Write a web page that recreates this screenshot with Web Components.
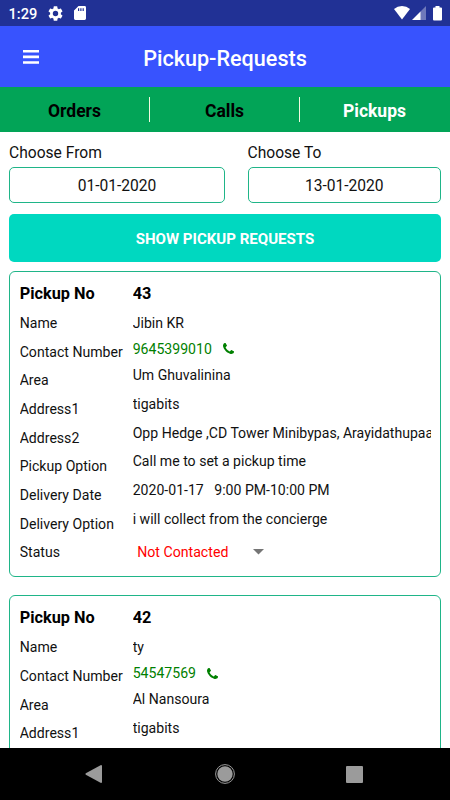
<!DOCTYPE html>
<html lang="en">
<head>
<meta charset="utf-8">
<title>Pickup-Requests</title>
<style>
html, body { margin: 0; height: 100%; }
body { font-family: Roboto, "Noto Sans", sans-serif; background: #fff; overflow: hidden; }
</style>
</head>
<body>
<pickup-app></pickup-app>
<script>
const define = (name, html, setup) => {
  const tpl = document.createElement('template');
  tpl.innerHTML = html;
  customElements.define(name, class extends HTMLElement {
    connectedCallback() {
      if (this.shadowRoot) return;
      const root = this.attachShadow({ mode: 'open' });
      root.append(tpl.content.cloneNode(true));
      if (setup) setup(this, root);
    }
  });
};

define('status-bar', `
<style>
:host { display: flex; align-items: center; height: 26px; box-sizing: border-box; padding: 0 8px 0 8.500px; background: #213195; color: #fff; flex: none; }
time { font-size: 14.6px; font-weight: 500; line-height: 26px; width: 40px; padding-top: 2px; }
svg { display: block; fill: #fff; }
.gear { margin-right: 11px; margin-left: -.5px; }
.space { flex: 1; }
.wifi { margin-right: 2px; }
.cell { margin-right: 7px; }
</style>
<time>1:29</time>
<svg class="gear" width="15" height="15" viewBox="2 2 20 20"><path d="M19.14 12.94c.04-.3.06-.61.06-.94s-.02-.64-.07-.94l2.03-1.58a.49.49 0 0 0 .12-.61l-1.92-3.32a.49.49 0 0 0-.59-.22l-2.39.96a7 7 0 0 0-1.62-.94l-.36-2.54a.48.48 0 0 0-.48-.41h-3.84a.47.47 0 0 0-.47.41l-.36 2.54c-.59.24-1.13.57-1.62.94l-2.39-.96a.48.48 0 0 0-.59.22L2.740 8.870a.47.47 0 0 0 .12.61l2.030 1.580a7.600 7.600 0 0 0 0 1.880l-2.030 1.580a.49.49 0 0 0-.12.61l1.920 3.320c.12.22.37.29.59.22l2.390-.96c.5.38 1.030.7 1.620.94l.36 2.540c.05.24.24.41.48.41h3.840c.24 0 .44-.17.47-.41l.36-2.540c.59-.24 1.130-.56 1.620-.94l2.390.96c.22.08.47 0 .59-.22l1.920-3.320a.47.47 0 0 0-.12-.61zM12 15.600A3.600 3.600 0 1 1 12 8.400a3.600 3.600 0 0 1 0 7.200z"/></svg>
<svg width="12" height="14" viewBox="0 0 12 14"><path fill-rule="evenodd" d="M4.5 0H10.6Q12 0 12 1.4V12.6Q12 14 10.6 14H1.4Q0 14 0 12.6V4.5ZM4 2.3V5H5.2V2.3ZM6.3 2.3V5H7.5V2.3ZM8.6 2.3V5H9.8V2.3Z"/></svg>
<span class="space"></span>
<svg class="wifi" width="16" height="14" viewBox="0 0 16 14"><path d="M0 3Q3.500 0 8 0T16 3L8 13.500Z"/></svg>
<svg class="cell" width="14" height="14" viewBox="0 0 14 14"><path opacity=".35" d="M8 6L14 0V14H8Z"/><path d="M0 14L8.500 5.500V14Z"/></svg>
<svg width="9" height="15" viewBox="0 0 9 15"><path d="M2.500 0H6.500V1.500H8Q9 1.500 9 2.500V13.500Q9 14.500 8 14.500H1Q0 14.500 0 13.500V2.500Q0 1.500 1 1.500H2.500Z"/></svg>
`);

define('app-header', `
<style>
:host { display: grid; grid-template-columns: 40px 1fr 40px; align-items: center; height: 61px; box-sizing: border-box; padding: 0 23px; background: #3853fe; color: #fff; flex: none; }
h1 { margin: 0; font-size: 21.600px; line-height: 30px; font-weight: 500; text-align: center; padding-top: 4px; }
svg { display: block; fill: #fff; }
</style>
<svg width="16" height="14" viewBox="0 0 16 14"><path d="M0 0H16V2.600H0ZM0 5.600H16V8.200H0ZM0 11.200H16V13.800H0Z"/></svg>
<h1><slot></slot></h1>
`);

define('tab-bar', `
<style>
:host { display: grid; grid-template-columns: repeat(3, 1fr); align-items: center; height: 45px; background: #02a457; flex: none; }
</style>
<slot></slot>
`);

define('tab-item', `
<style>
:host { display: flex; align-items: center; justify-content: center; box-sizing: border-box; height: 25px; font-size: 17.500px; font-weight: 700; color: #000; border-right: 1.400px solid #f3fadf; padding: 2px 0 0 0; }
:host([active]) { color: #fff; border-right-color: transparent; }
</style>
<slot></slot>
`);

define('date-field', `
<style>
:host { display: block; }
label { display: block; font-size: 15.600px; line-height: 20px; padding-top: 1px; color: #111; }
div { box-sizing: border-box; height: 36px; margin-top: 3.500px; border: 1px solid #1fb588; border-radius: 5px; display: flex; align-items: center; justify-content: center; font-size: 15.600px; color: #111; padding-top: 2px; }
</style>
<label></label><div><slot></slot></div>
`, (el, root) => { root.querySelector('label').textContent = el.getAttribute('label'); });

define('primary-button', `
<style>
:host { display: block; }
button { display: block; width: 100%; height: 48px; padding: 2px 0 0; border: 0; border-radius: 5px; background: #00d8c0; color: #fff; font: 700 15.050px Roboto, "Noto Sans", sans-serif; }
</style>
<button><slot></slot></button>
`);

define('phone-link', `
<style>
:host { display: flex; align-items: center; color: #008000; }
svg { display: block; fill: #008000; margin-left: 11px; }
</style>
<slot></slot>
<svg width="11" height="11" viewBox="0 0 1408 1408"><path d="M1408 1112q0 27-10 70.500t-21 68.500q-21 50-122 106-94 51-186 51-27 0-52.500-3.500t-57.500-12.500-47.500-14.500-55.500-20.500-49-18q-98-35-175-83-128-79-264.500-215.500T152 776q-48-77-83-175-3-9-18-49t-20.500-55.500T16 449 3.500 391.500 0 339q0-92 51-186Q107 52 157 31q25-11 68.500-21T296 0q14 0 21 3 18 6 53 76 11 19 30 54t35 63.500 31 53.500q3 4 17.500 25t21.500 35.500 7 28.500q0 20-28.500 50t-62 55-62 53-28.500 46q0 9 5 22.500t8.500 20.500 14 24 11.500 19q76 137 174 235t235 174q2 1 19 11.500t24 14 20.500 8.500 22.500 5q18 0 46-28.500t53-62 55-62 50-28.500q14 0 28.500 7t35.500 21.500 25 17.500q25 15 53.500 31t63.500 35 54 30q70 35 76 53 3 7 3 21z"/></svg>
`);

define('status-select', `
<style>
:host { display: flex; align-items: center; width: 131.500px; box-sizing: border-box; padding-left: 4.500px; justify-content: space-between; color: #f00; font-size: 14.150px; }
svg { display: block; }
</style>
<span><slot></slot></span>
<svg width="11" height="6" viewBox="0 0 11 6"><path fill="#757575" d="M0 0H11L5.500 5.500Z"/></svg>
`);

define('pickup-card', `
<style>
:host { display: grid; grid-template-columns: 113px minmax(0, 1fr); box-sizing: border-box; height: 305.500px; padding: 7px 9px 0 9.700px; border: 1px solid #1fb588; border-radius: 6px; background: #fff; font-size: 14.080px; color: #111; overflow: hidden; }
.labels, .values { display: flex; flex-direction: column; }
.row { display: flex; align-items: center; height: 28.770px; flex: none; white-space: pre; overflow: hidden; }
.head { height: 28px; padding-bottom: 1.500px; font-size: 16.300px; font-weight: 700; color: #000; }
.labels .row:not(.head) { height: 28.700px; }
.values .phone { height: 24px; margin-top: -.5px; }
.values .last { height: 36px; margin-top: .5px; }
</style>
<div class="labels"></div><div class="values"></div>
`, (el, root) => {
  const d = el.data;
  const add = (col, cls, text, tag) => {
    const row = document.createElement('div');
    row.className = 'row ' + cls;
    if (tag) {
      const inner = document.createElement(tag);
      inner.textContent = text;
      row.append(inner);
    } else row.textContent = text;
    root.querySelector(col).append(row);
  };
  const labels = ['Name', 'Contact Number', 'Area', 'Address1', 'Address2', 'Pickup Option', 'Delivery Date', 'Delivery Option'];
  add('.labels', 'head', 'Pickup No');
  labels.slice(0, 2 + d.details.length).forEach(t => add('.labels', '', t));
  add('.values', 'head', d.no);
  add('.values', '', d.name);
  add('.values', 'phone', d.phone, 'phone-link');
  d.details.forEach(t => add('.values', '', t));
  if (d.status) {
    add('.labels', '', 'Status');
    add('.values', 'last', d.status, 'status-select');
  }
});

define('nav-bar', `
<style>
:host { display: flex; align-items: center; justify-content: space-between; height: 52px; box-sizing: border-box; padding: 0 87px 0 85px; background: #000; flex: none; }
svg { display: block; fill: #9b9b9b; }
svg:nth-of-type(2) { margin-left: 2px; }
</style>
<svg width="17" height="18" viewBox="0 0 17 18"><path d="M16 0Q17 0 17 1V17Q17 18 16 18L.8 9.700Q0 9 .8 8.300Z"/></svg>
<svg width="20" height="20" viewBox="0 0 20 20"><circle cx="10" cy="10" r="7.700"/><circle cx="10" cy="10" r="9.400" fill="none" stroke="#9b9b9b" stroke-width="1"/></svg>
<svg width="17" height="17" viewBox="0 0 17 17"><rect width="17" height="17" rx="1"/></svg>
`);

define('pickup-app', `
<style>
:host { display: flex; flex-direction: column; width: 450px; height: 800px; overflow: hidden; }
main { flex: 1; min-height: 0; overflow: hidden; padding: 10px 9px 0; }
.dates { display: grid; grid-template-columns: 216px 193.500px; justify-content: space-between; }
primary-button { margin-top: 11px; }
.cards { display: grid; gap: 18.800px; margin-top: 9.500px; }
</style>
<status-bar></status-bar>
<app-header>Pickup-Requests</app-header>
<tab-bar><tab-item>Orders</tab-item><tab-item>Calls</tab-item><tab-item active>Pickups</tab-item></tab-bar>
<main>
  <div class="dates">
    <date-field label="Choose From">01-01-2020</date-field>
    <date-field label="Choose To">13-01-2020</date-field>
  </div>
  <primary-button>SHOW PICKUP REQUESTS</primary-button>
  <div class="cards"></div>
</main>
<nav-bar></nav-bar>
`, (el, root) => {
  const pickups = [
    { no: '43', name: 'Jibin KR', phone: '9645399010', status: 'Not Contacted',
      details: ['Um Ghuvalinina', 'tigabits', 'Opp Hedge ,CD Tower Minibypas, Arayidathupaa', 'Call me to set a pickup time', '2020-01-17   9:00 PM-10:00 PM', 'i will collect from the concierge'] },
    { no: '42', name: 'ty', phone: '54547569',
      details: ['Al Nansoura', 'tigabits'] }
  ];
  for (const data of pickups) {
    const card = document.createElement('pickup-card');
    card.data = data;
    root.querySelector('.cards').append(card);
  }
});
</script>
</body>
</html>
